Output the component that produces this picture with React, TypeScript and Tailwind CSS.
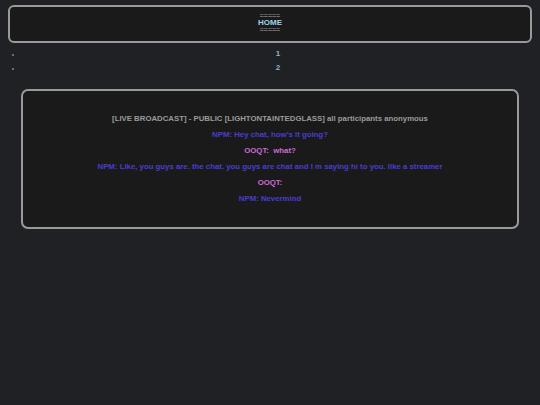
const LINES = [
  { who: 'NPM', text: ' Hey chat, how\u2019s it going?', cls: 'text-[#4a3dcf]' },
  { who: 'OOQT', text: '  what?', cls: 'text-[#cb6cd3]' },
  { who: 'NPM', text: ' Like, you guys are. the chat. you guys are chat and I m saying hi to you. like a streamer', cls: 'text-[#4a3dcf]' },
  { who: 'OOQT', text: '', cls: 'text-[#cb6cd3]' },
  { who: 'NPM', text: ' Nevermind', cls: 'text-[#4a3dcf]' },
];

export default function App() {
  return (
    <div className="min-h-[405px] bg-[#202124] px-2 pt-[5px] font-['Liberation_Sans',Arial,sans-serif] font-bold">
      {/* header */}
      <div className="h-[38px] rounded-[6px] border-2 border-[#9a9a9a] bg-[#1a1a1a] pb-[4px] flex flex-col items-center justify-center">
        <span className="text-[7px] leading-[7px] text-[#6f6f6f]">=====</span>
        <span className="text-[8px] leading-[7px] text-[#9fd2ea]">HOME</span>
        <span className="text-[7px] leading-[7px] text-[#6f6f6f]">=====</span>
      </div>

      <ul className="mt-[4px] list-disc pl-[14px] text-[8px] leading-[14px] text-[#8fb4cc] marker:text-[#8a8a8a] marker:text-[5px]">
        <li className="text-center pl-[2px]">1</li>
        <li className="text-center pl-[2px]">2</li>
      </ul>

      {/* chat */}
      <div className="mx-[13px] mt-[14px] h-[140px] rounded-[7px] border-2 border-[#9a9a9a] bg-[#1a1a1a] pt-[22px] flex flex-col items-center gap-[4px] text-[7.8px] leading-[12px] whitespace-pre">
        <p className="text-[#9a9a9a]">[LIVE BROADCAST] - PUBLIC [LIGHTONTAINTEDGLASS] all participants anonymous</p>
        {LINES.map((l, i) => (
          <p key={i} className={l.cls}>
            {l.who}:{l.text}
          </p>
        ))}
      </div>
    </div>
  );
}
